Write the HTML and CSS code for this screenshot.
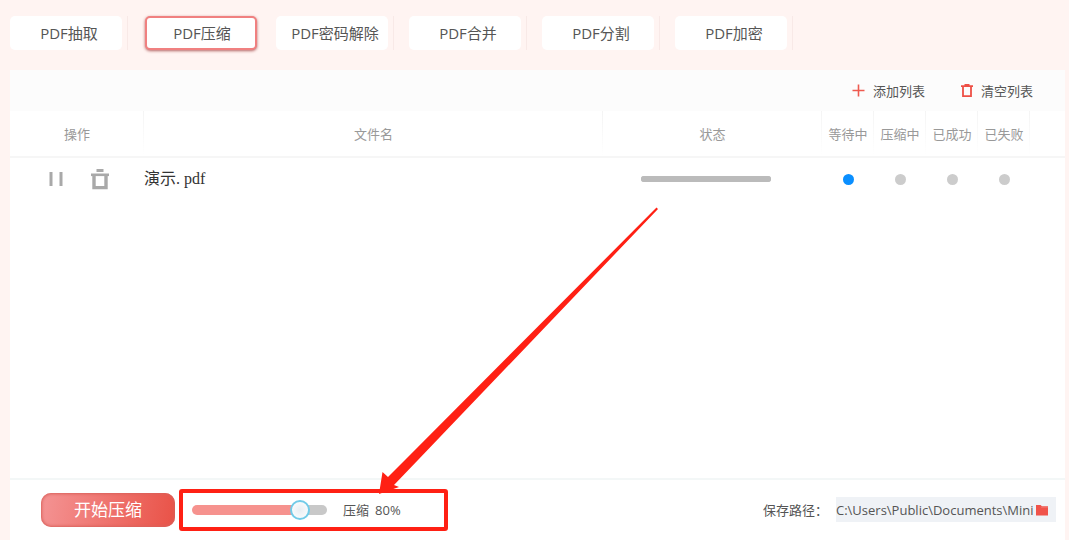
FILE: index.html
```html
<!DOCTYPE html>
<html lang="zh-CN">
<head>
<meta charset="utf-8">
<title>PDF压缩</title>
<link rel="stylesheet" href="styles.css">
</head>
<body>
<div class="app">
  <nav class="tabs">
    <div class="tab-slot"><button class="tab" type="button">PDF抽取</button></div>
    <div class="tab-slot tab-slot-active"><button class="tab tab-active" type="button">PDF压缩</button></div>
    <div class="tab-slot"><button class="tab" type="button">PDF密码解除</button></div>
    <div class="tab-slot"><button class="tab" type="button">PDF合并</button></div>
    <div class="tab-slot"><button class="tab" type="button">PDF分割</button></div>
    <div class="tab-slot"><button class="tab" type="button">PDF加密</button></div>
  </nav>
  <main class="panel">
    <div class="toolbar">
      <button class="tool" type="button">
        <svg width="13" height="13" viewBox="0 0 13 13"><path d="M6.5 0.5v12M0.5 6.5h12" fill="none" stroke="#ee5a4f" stroke-width="1.6"/></svg>
        添加列表
      </button>
      <button class="tool" type="button">
        <svg width="12" height="13" viewBox="0 0 12 13"><path d="M0 2.2h12M3.5 1h5M2 2.5v9.6h8V2.5" fill="none" stroke="#ee5046" stroke-width="1.8"/></svg>
        清空列表
      </button>
    </div>
    <table class="files">
      <colgroup>
        <col class="col-action"><col><col class="col-progress">
        <col class="col-state"><col class="col-state"><col class="col-state"><col class="col-state"><col class="col-end">
      </colgroup>
      <thead>
        <tr><th>操作</th><th>文件名</th><th>状态</th><th>等待中</th><th>压缩中</th><th>已成功</th><th>已失败</th><td></td></tr>
      </thead>
      <tbody>
        <tr>
          <td>
            <div class="actions">
              <button class="icon-button" type="button" aria-label="暂停"><svg width="14" height="16" viewBox="0 0 14 16"><path d="M2 1v14M12 1v14" stroke="#a9a9a9" stroke-width="3"/></svg></button>
              <button class="icon-button" type="button" aria-label="删除"><svg width="18" height="21" viewBox="0 0 18 21"><path d="M5.500 1.5h7" stroke="#a9a9a9" stroke-width="3"/><path d="M0 5.800h18" stroke="#a9a9a9" stroke-width="2.6"/><path d="M3 6v12.600h12V6" fill="none" stroke="#a9a9a9" stroke-width="3.4"/></svg></button>
            </div>
          </td>
          <td class="file-name">演示. pdf</td>
          <td class="progress-cell"><progress class="progress" value="0" max="100" aria-label="进度"></progress></td>
          <td><span class="dot dot-on"></span></td>
          <td><span class="dot"></span></td>
          <td><span class="dot"></span></td>
          <td><span class="dot"></span></td>
          <td></td>
        </tr>
      </tbody>
    </table>
    <footer class="footer">
      <button class="start" type="button">开始压缩</button>
      <div class="ratio">
        <input class="slider" id="ratio" type="range" min="0" max="100" value="85">
        <label class="ratio-label" for="ratio"><span>压缩</span><span>80%</span></label>
      </div>
      <div class="save">
        <label for="path">保存路径：</label>
        <div class="path-box">
          <input class="path" id="path" type="text" value="C:\Users\Public\Documents\Mini" readonly>
          <button class="icon-button" type="button" aria-label="选择文件夹"><svg width="12" height="12" viewBox="0 0 12 12"><path d="M0 1h4.5L6 2.2H12V11.5H0z" fill="#f0534a"/><path d="M5 3.2h7" stroke="#f58b84" stroke-width=".6"/></svg></button>
        </div>
      </div>
    </footer>
  </main>
  <svg class="arrow" width="282" height="290" viewBox="376 206 282 290"><path d="M656.500 207.500L658 209 418 460 394 485 399 487 379 494 382.500 472 388 477 405 460z" fill="#ff2014"/></svg>
</div>
</body>
</html>
```
FILE: styles.css
```css
* { box-sizing: border-box; }

body {
  margin: 0;
  background: #fff4f2;
  color: #555;
  font: 13px/18px "Open Sans", "Noto Sans CJK SC", sans-serif;
}

button, input { font: inherit; color: inherit; }

button {
  padding: 0;
  border: 0;
  background: none;
  cursor: pointer;
}

svg { display: block; }

.app {
  position: relative;
  display: flex;
  flex-direction: column;
  min-height: 100vh;
  padding: 16px 4px 0 10px;
}

.tabs {
  display: flex;
  gap: 15px;
  padding-bottom: 20px;
}

.tab-slot {
  padding-right: 5px;
  border-right: 1px solid #f8e9e7;
}

.tab-slot-active {
  padding: 0 3px 0 2px;
  border-color: transparent;
}

.tab {
  width: 112px;
  height: 34px;
  padding-left: 6px;
  border-radius: 5px;
  background: #fff;
  font-size: 15px;
}

.tab-active {
  border: 2px solid #f08080;
  padding-left: 2px;
  box-shadow: 0 1px 3px #b46464;
}

.panel {
  flex: 1;
  display: flex;
  flex-direction: column;
  background: #fff;
}

.toolbar {
  display: flex;
  justify-content: flex-end;
  gap: 36px;
  height: 41px;
  padding-right: 32px;
  background: #fcfcfc;
}

.tool {
  display: flex;
  align-items: center;
  gap: 8px;
}

.files {
  width: 100%;
  table-layout: fixed;
  border-collapse: collapse;
}

.col-action { width: 134px; }
.col-progress { width: 219px; }
.col-state { width: 52px; }
.col-end { width: 35px; }

.files th, .files td {
  padding: 0;
  text-align: center;
}

.files thead { border-bottom: 2px solid #f6f6f6; }

.files th {
  height: 46px;
  color: #999;
  font-weight: 400;
  background: linear-gradient(#f4f4f4, #fff) right / 1px 100% no-repeat;
}

.files tbody td { height: 43px; }

.actions {
  display: flex;
  align-items: center;
  justify-content: center;
  gap: 28px;
  padding-left: 4px;
}

.files .file-name {
  color: #333;
  font: 16px/20px "Liberation Serif", "Noto Sans CJK SC", serif;
  text-align: left;
}

.files .progress-cell { padding-right: 14px; }

.progress {
  display: block;
  width: 130px;
  height: 6px;
  margin: 0 auto;
  border: 0;
  border-radius: 3px;
  background: #bbb;
  appearance: none;
}

.progress::-webkit-progress-bar {
  border-radius: 3px;
  background: #bbb;
}

.dot {
  display: block;
  width: 11px;
  height: 11px;
  margin: 0 auto;
  border-radius: 50%;
  background: #ccc;
}

.dot-on { background: #0a8fff; }

.footer {
  display: flex;
  align-items: center;
  height: 62px;
  margin-top: auto;
  padding: 0 9px 1px 31px;
  border-top: 2px solid #f3f7f7;
}

.start {
  width: 134px;
  height: 34px;
  border-radius: 10px;
  background: linear-gradient(100deg, #f49494, #e95247);
  box-shadow: inset 0 0 3px 1px #d9605a;
  color: #fff;
  font-size: 17px;
}

.ratio {
  display: flex;
  align-items: center;
  gap: 16px;
  width: 269px;
  height: 42px;
  margin-left: 4px;
  padding-left: 9px;
  border: 4px solid #ff2014;
  border-radius: 3px;
}

.ratio-label {
  display: flex;
  gap: 6px;
}

.slider {
  width: 135px;
  height: 20px;
  margin: 0;
  background: none;
  appearance: none;
}

.slider::-webkit-slider-runnable-track {
  height: 10px;
  border-radius: 5px;
  background: linear-gradient(90deg, #f6928e 80%, #c8c8c8 80%);
}

.slider::-webkit-slider-thumb {
  width: 20px;
  height: 20px;
  margin-top: -5px;
  border: 2px solid #72cbe8;
  border-radius: 50%;
  background: radial-gradient(#e8edf2, #fff);
  appearance: none;
}

.save {
  display: flex;
  align-items: center;
  gap: 8px;
  margin-left: auto;
}

.path-box {
  display: flex;
  align-items: center;
  width: 220px;
  height: 25px;
  padding-right: 8px;
  background: #eff2f6;
}

.path {
  flex: 1;
  min-width: 0;
  padding: 0;
  border: 0;
  outline: 0;
  background: none;
}

.arrow {
  position: absolute;
  left: 376px;
  bottom: 44px;
  pointer-events: none;
}
```
